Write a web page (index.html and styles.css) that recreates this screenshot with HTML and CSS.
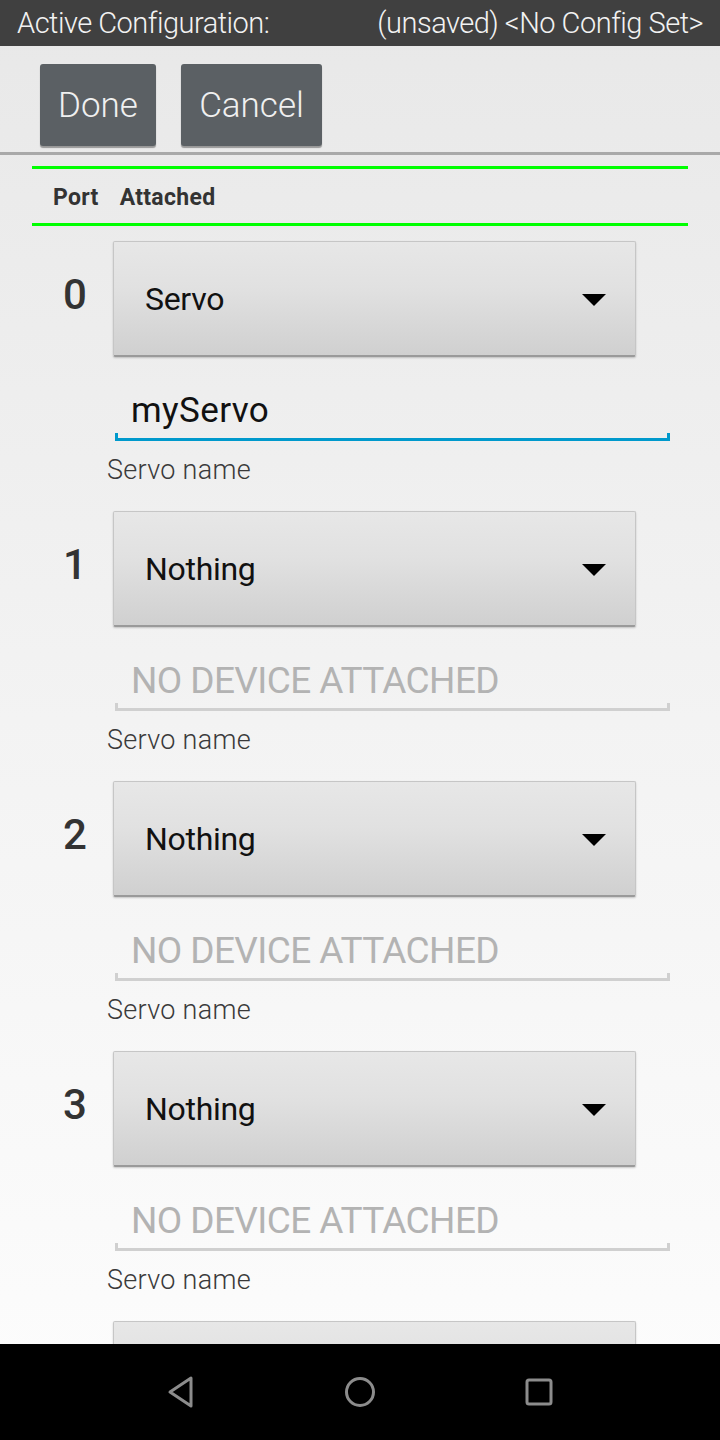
FILE: index.html
```html
<!DOCTYPE html>
<html>
<head>
<meta charset="utf-8">
<link rel="stylesheet" href="styles.css">
</head>
<body>
<div class="screen">
  <header class="topbar">
    <span class="topbar-label">Active Configuration:</span>
    <span class="topbar-value">(unsaved) &lt;No Config Set&gt;</span>
  </header>
  <div class="toolbar">
    <button class="btn btn-done">Done</button>
    <button class="btn btn-cancel">Cancel</button>
  </div>
  <div class="divider"></div>
  <main class="content">
    <div class="table-head">
      <span class="col-port">Port</span>
      <span class="col-attached">Attached</span>
    </div>

    <section class="port-row">
      <div class="port-num">0</div>
      <div class="port-body">
        <div class="spinner"><span class="spinner-text">Servo</span><span class="caret"></span></div>
        <div class="field field-active"><span class="field-text">myServo</span></div>
        <div class="field-label">Servo name</div>
      </div>
    </section>

    <section class="port-row">
      <div class="port-num">1</div>
      <div class="port-body">
        <div class="spinner"><span class="spinner-text">Nothing</span><span class="caret"></span></div>
        <div class="field"><span class="field-text placeholder">NO DEVICE ATTACHED</span></div>
        <div class="field-label">Servo name</div>
      </div>
    </section>

    <section class="port-row">
      <div class="port-num">2</div>
      <div class="port-body">
        <div class="spinner"><span class="spinner-text">Nothing</span><span class="caret"></span></div>
        <div class="field"><span class="field-text placeholder">NO DEVICE ATTACHED</span></div>
        <div class="field-label">Servo name</div>
      </div>
    </section>

    <section class="port-row">
      <div class="port-num">3</div>
      <div class="port-body">
        <div class="spinner"><span class="spinner-text">Nothing</span><span class="caret"></span></div>
        <div class="field"><span class="field-text placeholder">NO DEVICE ATTACHED</span></div>
        <div class="field-label">Servo name</div>
      </div>
    </section>

    <section class="port-row">
      <div class="port-num"></div>
      <div class="port-body">
        <div class="spinner"></div>
      </div>
    </section>
  </main>
  <nav class="navbar">
    <svg class="nav-icon" width="30" height="34" viewBox="0 0 30 34"><path d="M25 3 L25 31 L4 17 Z" fill="none" stroke="#8c8c8c" stroke-width="3" stroke-linejoin="round"/></svg>
    <svg class="nav-icon" width="32" height="32" viewBox="0 0 32 32"><circle cx="16" cy="16" r="13.5" fill="none" stroke="#8c8c8c" stroke-width="3"/></svg>
    <svg class="nav-icon" width="30" height="30" viewBox="0 0 30 30"><rect x="3" y="3" width="24" height="24" rx="2" fill="none" stroke="#8c8c8c" stroke-width="3"/></svg>
  </nav>
</div>
</body>
</html>
```

FILE: styles.css
```css
* { box-sizing: border-box; }
html, body { margin: 0; padding: 0; }
body {
  font-family: Roboto, "Liberation Sans", sans-serif;
  width: 720px;
  height: 1440px;
  overflow: hidden;
}
.screen {
  width: 720px;
  height: 1440px;
  display: flex;
  flex-direction: column;
  background: linear-gradient(to bottom, #e8e8e8 0%, #f3f3f3 50%, #fdfdfd 100%);
}
.topbar {
  height: 46px;
  flex: none;
  background: #404040;
  color: #f2f2f2;
  display: flex;
  align-items: center;
  justify-content: space-between;
  padding: 0 17px 0 17px;
  font-size: 29px;
  font-weight: 300;
  letter-spacing: -0.5px;
}
.toolbar {
  height: 106px;
  flex: none;
  display: flex;
  align-items: flex-start;
  padding: 18px 0 0 40px;
  gap: 25px;
}
.btn {
  height: 82px;
  padding: 0;
  background: #5b6064;
  color: #f0f0f0;
  border: none;
  border-radius: 3px;
  box-shadow: 0 2px 1px rgba(0,0,0,0.35);
  font-family: Roboto, sans-serif;
  font-weight: 300;
  font-size: 35px;
}
.btn-done { width: 116px; }
.btn-cancel { width: 141px; }
.divider {
  height: 3px;
  flex: none;
  background: #a9a9a9;
}
.content {
  flex: 1;
  overflow: hidden;
  padding: 11px 32px 0 32px;
  display: flex;
  flex-direction: column;
}
.table-head {
  flex: none;
  height: 60px;
  border-top: 3px solid #00ff00;
  border-bottom: 3px solid #00ff00;
  display: flex;
  align-items: center;
  padding-left: 21px;
  padding-top: 3px;
  gap: 21px;
  font-weight: 700;
  font-size: 23px;
  color: #333;
  letter-spacing: 0.3px;
}
.port-row {
  flex: none;
  display: flex;
  padding-top: 15px;
  height: 270px;
}
.port-num {
  width: 81px;
  flex: none;
  text-align: center;
  padding-left: 5px;
  font-size: 42px;
  font-weight: 500;
  color: #333;
  line-height: 108px;
  height: 116px;
}
.port-body {
  flex: 1;
  display: flex;
  flex-direction: column;
}
.spinner {
  width: 523px;
  height: 116px;
  flex: none;
  display: flex;
  align-items: center;
  justify-content: space-between;
  padding: 0 29px 0 31px;
  background: linear-gradient(to bottom, #e7e7e7 0%, #e1e1e1 40%, #d0d0d0 100%);
  border: 1px solid #c6c6c6;
  border-bottom: 2px solid #9a9a9a;
  border-radius: 2px;
  box-shadow: 0 1px 2px rgba(0,0,0,0.2);
}
.spinner-text {
  font-size: 32px;
  color: #111;
  letter-spacing: -0.3px;
}
.caret {
  width: 0;
  height: 0;
  border-left: 12px solid transparent;
  border-right: 12px solid transparent;
  border-top: 12px solid #000;
  margin-top: 2px;
  margin-left: auto;
}
.field {
  margin-left: 2px;
  width: 555px;
  height: 84px;
  flex: none;
  display: flex;
  align-items: flex-end;
  padding: 0 0 7px 16px;
  border-bottom: 3px solid #d0d0d0;
  position: relative;
}
.field::before, .field::after {
  content: "";
  position: absolute;
  bottom: -3px;
  width: 3px;
  height: 8px;
  background: #d0d0d0;
}
.field::before { left: 0; }
.field::after { right: 0; }
.field-active { border-bottom-color: #0099cc; }
.field-active::before, .field-active::after { background: #0099cc; }
.field-text {
  font-size: 35px;
  color: #111;
  line-height: 40px;
  letter-spacing: 0.4px;
}
.placeholder {
  color: #b3b3b3;
  font-size: 37px;
  letter-spacing: -0.6px;
}
.field-label {
  margin-left: -6px;
  margin-top: 13px;
  font-size: 27px;
  font-weight: 300;
  color: #3a3a3a;
  letter-spacing: 0.3px;
}
.navbar {
  height: 96px;
  flex: none;
  background: #000;
  display: flex;
  align-items: center;
  justify-content: center;
  gap: 148px;
}
.nav-icon { display: block; }
```
